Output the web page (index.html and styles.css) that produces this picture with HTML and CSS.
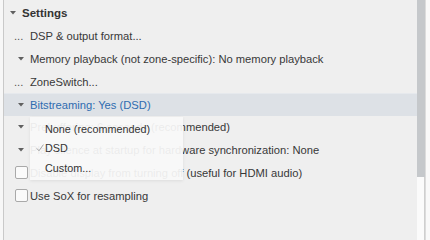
FILE: index.html
```html
<!DOCTYPE html>
<html>
<head>
<meta charset="utf-8">
<link rel="stylesheet" href="styles.css">
</head>
<body>
<div class="frame">
  <div class="gutter"></div>
  <div class="list">
    <div class="row head">
      <span class="lead"><svg class="caret" width="6" height="4" viewBox="0 0 6 4"><path d="M0 0H6L3 3.6Z"/></svg></span>
      <span class="label">Settings</span>
    </div>
    <div class="row child">
      <span class="lead"><span class="dots">...</span></span>
      <span class="label">DSP &amp; output format...</span>
    </div>
    <div class="row child">
      <span class="lead"><svg class="caret" width="6" height="4" viewBox="0 0 6 4"><path d="M0 0H6L3 3.6Z"/></svg></span>
      <span class="label">Memory playback (not zone-specific): No memory playback</span>
    </div>
    <div class="row child">
      <span class="lead"><span class="dots">...</span></span>
      <span class="label">ZoneSwitch...</span>
    </div>
    <div class="row child selected">
      <span class="lead"><svg class="caret" width="6" height="4" viewBox="0 0 6 4"><path d="M0 0H6L3 3.6Z"/></svg></span>
      <span class="label">Bitstreaming: Yes (DSD)</span>
    </div>
    <div class="row child">
      <span class="lead"><svg class="caret" width="6" height="4" viewBox="0 0 6 4"><path d="M0 0H6L3 3.6Z"/></svg></span>
      <span class="label">Prebuffering: 6 seconds (recommended)</span>
    </div>
    <div class="row child">
      <span class="lead"><svg class="caret" width="6" height="4" viewBox="0 0 6 4"><path d="M0 0H6L3 3.6Z"/></svg></span>
      <span class="label">Play silence at startup for hardware synchronization: None</span>
    </div>
    <div class="row child">
      <span class="lead"><span class="check"></span></span>
      <span class="label">Disable display from turning off (useful for HDMI audio)</span>
    </div>
    <div class="row child">
      <span class="lead"><span class="check"></span></span>
      <span class="label">Use SoX for resampling</span>
    </div>

    <div class="menu">
      <div class="item"><span class="mark"></span>None (recommended)</div>
      <div class="item"><span class="mark"><svg width="8" height="8" viewBox="0 0 8 8"><path d="M0.8 4.4L3 6.8L7.4 0.6" fill="none" stroke="#9a9a9a" stroke-width="0.9"/></svg></span>DSD</div>
      <div class="item"><span class="mark"></span>Custom...</div>
    </div>
  </div>
  <div class="scroll"><div class="thumb"></div><div class="track"></div></div>
  <div class="edge"></div>
</div>
</body>
</html>
```
FILE: styles.css
```css
html, body {
  margin: 0;
  padding: 0;
  height: 100%;
  overflow: hidden;
  background: #efefef;
}
body {
  font-family: "Liberation Sans", Arial, Helvetica, sans-serif;
  font-size: 11.2px;
  color: #383838;
}
.frame {
  display: flex;
  height: 100vh;
}
.gutter {
  width: 3px;
  background: #f7f7f7;
  border-right: 1px solid #c9c9c9;
}
.list {
  position: relative;
  flex: 1;
  background: #efefef;
  padding-top: 2px;
}
.row {
  display: flex;
  align-items: center;
  height: 22.8px;
  white-space: nowrap;
}
.lead {
  display: flex;
  align-items: center;
  width: 15px;
  flex: none;
}
.caret {
  fill: #606060;
  display: block;
}
.head {
  padding-left: 6px;
}
.head .lead {
  width: 12px;
}
.head .label {
  font-weight: bold;
  font-size: 11.5px;
  color: #333;
}
.child {
  padding-left: 11px;
}
.child .caret {
  margin-left: 3px;
}
.dots {
  margin-left: -1px;
  color: #555;
}
.selected {
  background: #dde1e6;
  box-shadow: inset 0 1px 0 #e6e9ed;
}
.selected .label {
  color: #2f6cb0;
}
.check {
  width: 11px;
  height: 11px;
  border: 1px solid #a9a9a9;
  border-radius: 2px;
  background: #fafafa;
}
.menu {
  position: absolute;
  left: 26px;
  top: 117px;
  width: 153px;
  padding: 2px 0;
  background: rgba(249, 249, 249, 0.93);
  box-shadow: 0 1px 3px rgba(0, 0, 0, 0.08);
}
.item {
  display: flex;
  align-items: center;
  height: 19.6px;
  font-size: 10.8px;
  color: #333;
}
.mark {
  box-sizing: border-box;
  width: 15px;
  padding-left: 6px;
  display: flex;
  align-items: center;
  flex: none;
}
.scroll {
  width: 8px;
  display: flex;
  flex-direction: column;
}
.thumb {
  height: 177px;
  background: #c5c8cb;
}
.track {
  flex: 1;
  background: #fbfbfb;
  border-right: 1px solid #cfcfcf;
}
.edge {
  width: 4px;
  background: #f9f9f9;
  border-left: 1px solid #dcdcdc;
}
```
